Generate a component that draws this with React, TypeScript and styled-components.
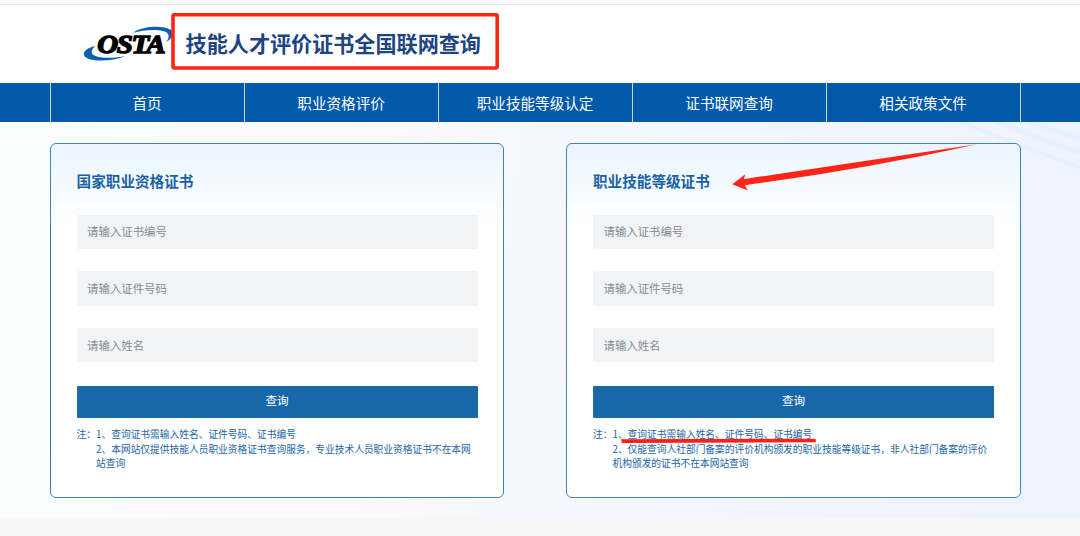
import React from 'react';
import styled, { createGlobalStyle } from 'styled-components';

const GlobalStyle = createGlobalStyle`
  * { box-sizing: border-box; }
  html, body { margin: 0; padding: 0; }
  body {
    background: #fff;
    font-family: "Noto Sans CJK SC", "Open Sans", sans-serif;
    overflow: hidden;
  }
`;

const Page = styled.div`
  position: relative;
  display: flex;
  flex-direction: column;
  width: 1080px;
  height: 536px;
  overflow: hidden;
  background: #f7f7f7;
`;

const Header = styled.header`
  display: flex;
  align-items: flex-start;
  height: 83.4px;
  padding: 4px 0 0 82px;
  background: linear-gradient(#fff 4px, #e4e4e4 4px, #e4e4e4 5px, #fff 5px);
`;

const Logo = styled.svg`
  flex: none;
  width: 96px;
  height: 44px;
  margin-top: 18px;
`;

const SiteTitle = styled.h1`
  margin: 21.5px 0 0 7.6px;
  color: #204482;
  font-size: 21.1px;
  line-height: 34px;
  font-weight: 700;
  white-space: nowrap;
`;

const Nav = styled.nav`
  display: flex;
  flex: none;
  height: 39px;
  padding: 0 59.4px 0 49.6px;
  background: #0059a9;
`;

const NavItem = styled.a`
  flex: 1;
  display: flex;
  align-items: center;
  justify-content: center;
  border-left: 1px solid #c3d8eb;
  color: #fff;
  font-size: 14.6px;
  line-height: 20px;
  padding-top: 1px;
  &:last-child {
    border-right: 1px solid #c3d8eb;
  }
`;

const Content = styled.main`
  position: relative;
  display: flex;
  align-items: flex-start;
  justify-content: space-between;
  flex: none;
  height: 395.6px;
  padding: 20.2px 59.3px 0 49.5px;
  background: linear-gradient(97deg, #fbfdff 0%, #fbfbff 25%, #f7f8ff 52%, #f0f4ff 78%, #edf3ff 100%);
`;

const Rays = styled.svg`
  position: absolute;
  top: 0;
  right: 0;
  width: 180px;
  height: 90px;
`;

const Card = styled.section`
  position: relative;
  width: 454.8px;
  height: 355.4px;
  padding: 23.4px 25px 0 26.1px;
  border: 1px solid #3f83bd;
  border-radius: 6px;
  background: linear-gradient(#eaf5ff 0, #fff 78px);
`;

const CardTitle = styled.h2`
  margin: 0 0 20.6px;
  color: #1a62a6;
  font-size: 14.6px;
  line-height: 27px;
  font-weight: 700;
`;

const Fields = styled.div`
  display: flex;
  flex-direction: column;
  gap: 22.6px;
`;

const Field = styled.input`
  display: block;
  width: 401px;
  height: 34.2px;
  padding: 0 10.5px 0.8px;
  border: 0;
  border-radius: 1px;
  outline: 0;
  background: #f1f3f5;
  font-family: inherit;
  font-size: 11.4px;
  &::placeholder {
    color: #858b93;
    opacity: 1;
  }
`;

const QueryButton = styled.button`
  display: block;
  width: 401px;
  height: 32px;
  margin-top: 23.2px;
  padding: 0 0 3px;
  border: 0;
  border-radius: 1px;
  background: #1868a9;
  color: #fff;
  font-family: inherit;
  font-size: 11.6px;
`;

const Note = styled.div`
  display: flex;
  margin-top: 9.8px;
  color: #2266a6;
  font-size: 9.72px;
  line-height: 14.6px;
`;

const NoteLabel = styled.span`
  flex: none;
  width: 19.5px;
`;

const NoteLines = styled.div`
  white-space: nowrap;
`;

const Marks = styled.svg`
  position: absolute;
  top: 0;
  left: 0;
  width: 1080px;
  height: 536px;
  pointer-events: none;
`;

const navItems = ['首页', '职业资格评价', '职业技能等级认定', '证书联网查询', '相关政策文件'];
const placeholders = ['请输入证书编号', '请输入证件号码', '请输入姓名'];
const cards = [
  {
    title: '国家职业资格证书',
    notes: [
      '1、查询证书需输入姓名、证件号码、证书编号',
      '2、本网站仅提供技能人员职业资格证书查询服务，专业技术人员职业资格证书不在本网',
      '站查询',
    ],
  },
  {
    title: '职业技能等级证书',
    notes: [
      '1、查询证书需输入姓名、证件号码、证书编号',
      '2、仅能查询人社部门备案的评价机构颁发的职业技能等级证书，非人社部门备案的评价',
      '机构颁发的证书不在本网站查询',
    ],
  },
];

function OstaLogo() {
  return (
    <Logo viewBox="82 22 96 44" aria-label="OSTA">
      <path
        d="M95 46 C87 48 83 51.5 84 55 C85.500 61.500 109 63 125.700 56 C111 59.200 94 58 92 53.500 C91 51 92.500 48.500 95 46Z"
        fill="#0f5fb0"
      />
      <path
        d="M133 32.800 C143 26 163 25 171 30 C175 34 172 38.500 166.500 41.800 C169 38 170 34.500 165.500 31.800 C158 28.800 144 29.500 133 32.800Z"
        fill="#0f5fb0"
      />
      <text
        x="97.300"
        y="53"
        textLength="67"
        lengthAdjust="spacingAndGlyphs"
        fontFamily="Liberation Serif, serif"
        fontSize="25.500"
        fontStyle="italic"
        fontWeight="700"
        letterSpacing="-1.200"
        fill="#000"
        stroke="#000"
        strokeWidth="1.400"
      >
        OSTA
      </text>
    </Logo>
  );
}

export default function App() {
  return (
    <Page>
      <GlobalStyle />
      <Header>
        <OstaLogo />
        <SiteTitle>技能人才评价证书全国联网查询</SiteTitle>
      </Header>
      <Nav>
        {navItems.map((item) => (
          <NavItem key={item}>{item}</NavItem>
        ))}
      </Nav>
      <Content>
        <Rays viewBox="0 0 180 90" fill="none" stroke="#dfebff" strokeOpacity="0.45">
          <path d="M60 0 L180 46" strokeWidth="4" />
          <path d="M95 0 L180 31" strokeWidth="5" />
          <path d="M130 0 L180 17" strokeWidth="5" />
        </Rays>
        {cards.map((card) => (
          <Card key={card.title}>
            <CardTitle>{card.title}</CardTitle>
            <Fields>
              {placeholders.map((text) => (
                <Field key={text} placeholder={text} />
              ))}
            </Fields>
            <QueryButton>查询</QueryButton>
            <Note>
              <NoteLabel>注：</NoteLabel>
              <NoteLines>
                {card.notes.map((line) => (
                  <div key={line}>{line}</div>
                ))}
              </NoteLines>
            </Note>
          </Card>
        ))}
      </Content>
      <Marks viewBox="0 0 1080 536">
        <rect x="173" y="14.700" width="324.200" height="53.300" rx="1.500" fill="none" stroke="#ff2416" strokeWidth="3.600" />
        <path
          d="M732.300 184.300 L745.300 174.200 L743.800 179.200 Q850 163 977.500 144.200 Q860 170 744.700 185.200 L747.800 190.500Z"
          fill="#ff2416"
        />
        <path d="M621 439.200 L815.500 438.700 L816 442.300 L622 443Z" fill="#ff1f16" />
      </Marks>
    </Page>
  );
}
